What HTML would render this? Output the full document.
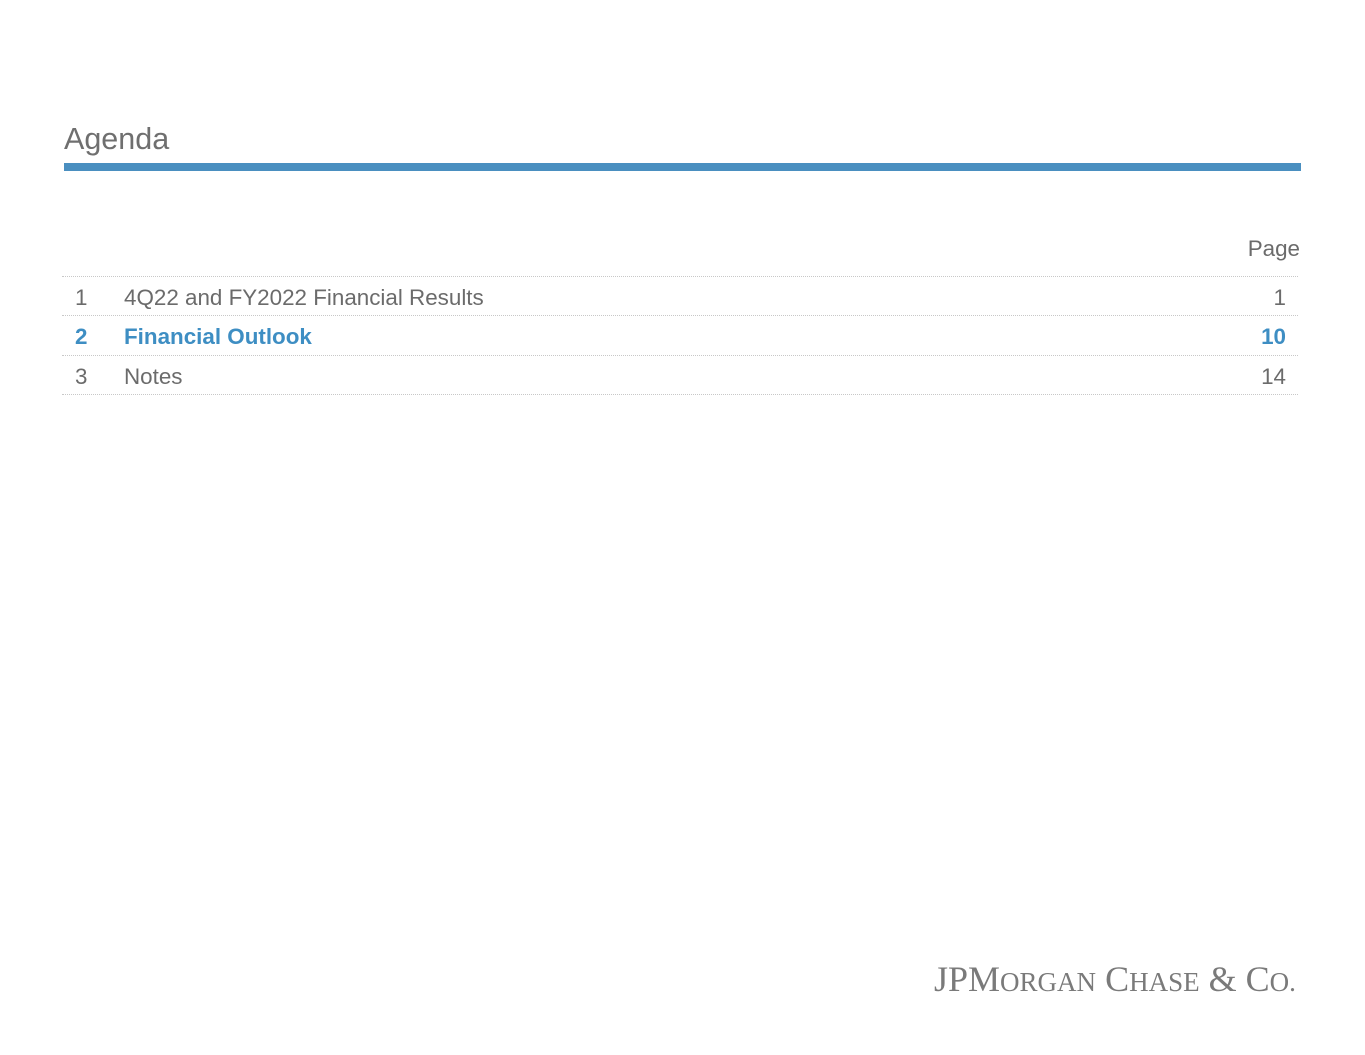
<!DOCTYPE html>
<html><head><style>
body{margin:0;width:1365px;height:1055px;background:#fff;position:relative;font-family:"Liberation Sans",sans-serif;color:#6b6b6b;overflow:hidden}
.a{position:absolute}
.t{font-size:22.4px;line-height:1}
.l{position:absolute;left:62px;width:1236px;height:0;border-top:1px dotted #c8c8c8}
</style></head><body>
<div class="a" style="left:64px;top:122px;font-size:30.5px;color:#6f6f6f">Agenda</div>
<div class="a" style="left:64px;top:163px;width:1237px;height:8px;background:#4a8fc0"></div>
<div class="a t" style="right:65px;top:238px">Page</div>
<div class="l" style="top:276px"></div>
<div class="a t" style="left:75px;top:287px">1</div>
<div class="a t" style="left:124px;top:287px">4Q22 and FY2022 Financial Results</div>
<div class="a t" style="right:79px;top:287px">1</div>
<div class="l" style="top:315px"></div>
<div class="a t" style="left:75px;top:326px;color:#3e8ec3;font-weight:bold">2</div>
<div class="a t" style="left:124px;top:326px;color:#3e8ec3;font-weight:bold">Financial Outlook</div>
<div class="a t" style="right:79px;top:326px;color:#3e8ec3;font-weight:bold">10</div>
<div class="l" style="top:355px"></div>
<div class="a t" style="left:75px;top:366px">3</div>
<div class="a t" style="left:124px;top:366px">Notes</div>
<div class="a t" style="right:79px;top:366px">14</div>
<div class="l" style="top:394px"></div>
<div class="a" style="left:934px;top:958px;font-family:'Liberation Serif',serif;color:#7a7a7a;font-size:36px;white-space:nowrap">JP<span>M</span><span style="font-size:27px">ORGAN</span> C<span style="font-size:27px">HASE</span> &amp; C<span style="font-size:27px">O.</span></div>
</body></html>
